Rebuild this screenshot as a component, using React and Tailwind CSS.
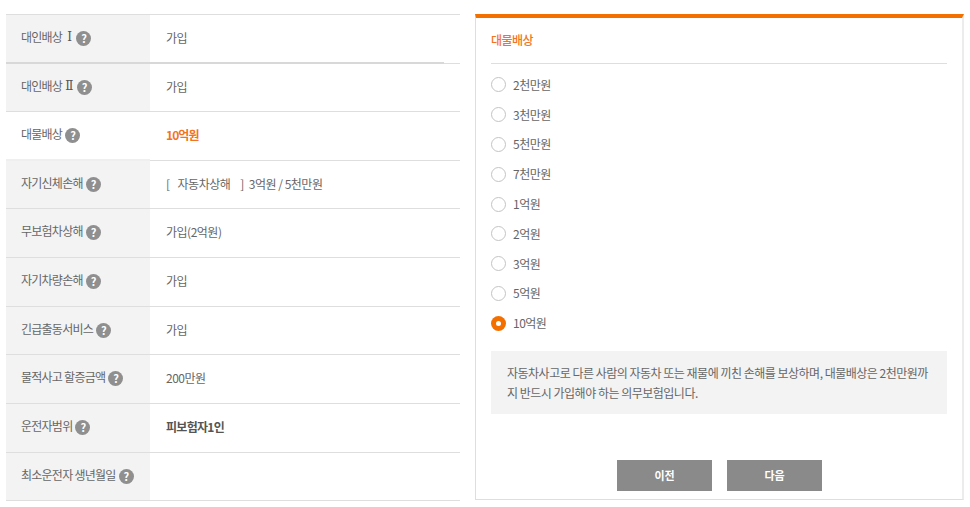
const font = { fontFamily: '"Noto Sans CJK KR", "Noto Sans", sans-serif' };

const rows = [
  { label: '대인배상', roman: 'Ⅰ', value: '가입', h: 'h-[49px]', dark: true },
  { label: '대인배상', roman: 'Ⅱ', value: '가입', h: 'h-[48px]' },
  { label: '대물배상', value: '10억원', active: true, h: 'h-[49px]', white: true, soft: true },
  { label: '자기신체손해', value: 'ins', h: 'h-[48px]' },
  { label: '무보험차상해', value: '가입(2억원)', h: 'h-[49px]' },
  { label: '자기차량손해', value: '가입', h: 'h-[49px]' },
  { label: '긴급출동서비스', value: '가입', h: 'h-[48px]' },
  { label: '물적사고 할증금액', value: '200만원', h: 'h-[49px]' },
  { label: '운전자범위', value: '피보험자1인', bold: true, h: 'h-[49px]' },
  { label: '최소운전자 생년월일', value: '', h: 'h-[48px]' },
];

const options = ['2천만원', '3천만원', '5천만원', '7천만원', '1억원', '2억원', '3억원', '5억원', '10억원'];

function Help() {
  return (
    <span className="mt-[3px] inline-flex h-[15px] w-[15px] shrink-0 items-center justify-center rounded-full bg-[#8f8f8f] text-[11px] font-bold leading-none text-white">
      ?
    </span>
  );
}

function Row({ row }) {
  return (
    <div className={`relative flex ${row.h} border-b border-[#dedede]`}>
      <div className={`flex w-[144px] shrink-0 items-center gap-[3px] pb-[4px] pl-[15px] tracking-[-0.75px] ${row.white ? 'bg-white' : 'bg-[#f3f3f3]'}`}>
        <span>{row.label}</span>
        {row.roman && (
          <span className={`text-[#555] ${row.roman === 'Ⅰ' ? 'ml-[2px] mr-[2px]' : 'mr-[1px]'}`} style={{ fontFamily: '"DejaVu Serif", serif' }}>
            {row.roman}
          </span>
        )}
        <Help />
      </div>
      <div className={`flex flex-1 items-center pb-[2px] pl-[16px] ${row.active ? 'font-bold tracking-[-0.9px] text-[#f37321]' : row.bold ? 'font-bold tracking-[-0.7px] text-[#555]' : 'tracking-[-0.5px]'}`}>
        {row.value === 'ins' ? (
          <span className="flex">
            <span className="mr-[8px]">[</span>
            <span>자동차상해</span>
            <span className="ml-[10px] mr-[5px]">]</span>
            <span>3억원 / 5천만원</span>
          </span>
        ) : (
          <span>{row.value}</span>
        )}
      </div>
      {row.dark && <div className="absolute -bottom-px left-0 h-[2px] w-[438px] bg-[#d8d8d8]" />}
      {row.soft && <div className="absolute -bottom-px left-0 h-[2px] w-[144px] bg-[#efefef]" />}
    </div>
  );
}

function Radio({ label, checked }) {
  return (
    <div className="flex h-[29.8px] items-center gap-[7px]">
      {checked ? (
        <span className="flex h-[15px] w-[15px] items-center justify-center rounded-full bg-[#f37000]">
          <span className="h-[5px] w-[5px] rounded-full bg-white" />
        </span>
      ) : (
        <span className="h-[15px] w-[15px] rounded-full border border-[#c4c4c4] bg-white" />
      )}
      <span className="tracking-[-0.5px]">{label}</span>
    </div>
  );
}

export default function App() {
  return (
    <div style={font} className="flex h-[507px] w-[970px] overflow-hidden bg-white pl-[6px] pt-[14px] text-[12px] text-[#666]">
      <div className="w-[454px] shrink-0 border-t border-[#dedede]">
        {rows.map((row) => (
          <Row key={row.label + (row.roman || '')} row={row} />
        ))}
      </div>

      <div className="ml-[15px] flex h-[486px] w-[489px] flex-col border border-t-4 border-[#dedede] border-r-2 border-r-[#ececec] border-t-[#f37000] pl-[15px] pr-[15px]">
        <div className="flex h-[46px] shrink-0 items-center border-b border-[#dedede] pb-[2px] font-medium tracking-[-0.5px] text-[#f37321]">
          대물배상
        </div>
        <div className="mt-[6px]">
          {options.map((o) => (
            <Radio key={o} label={o} checked={o === '10억원'} />
          ))}
        </div>
        <div className="mt-[13px] flex h-[63px] items-center bg-[#f3f3f3] pl-[16px] pr-[16px] leading-[20px] tracking-[-0.5px]">
          <p>자동차사고로 다른 사람의 자동차 또는 재물에 끼친 손해를 보상하며, 대물배상은 2천만원까지 반드시 가입해야 하는 의무보험입니다.</p>
        </div>
        <div className="mt-[46px] flex justify-center gap-[15px] pl-[1px]">
          <button className="h-[31px] w-[95px] bg-[#8a8a8a] text-[11px] font-bold text-white">이전</button>
          <button className="h-[31px] w-[95px] bg-[#8a8a8a] text-[11px] font-bold text-white">다음</button>
        </div>
      </div>
    </div>
  );
}
